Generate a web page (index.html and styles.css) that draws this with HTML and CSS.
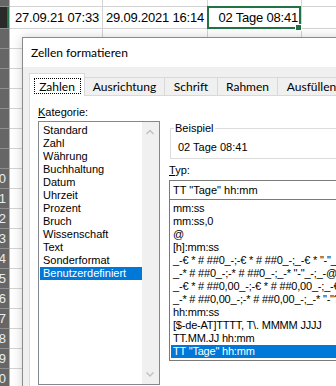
FILE: index.html
```html
<!DOCTYPE html>
<html lang="de">
<head>
<meta charset="utf-8">
<title>Zellen formatieren</title>
<link rel="stylesheet" href="styles.css">
</head>
<body>
<div class="sheet">
  <div class="h"></div><div class="c"></div><div class="c"></div><div class="c"></div><div class="c"></div>
  <div class="h sel"></div><div class="c">27.09.21 07:33</div><div class="c">29.09.2021 16:14</div><div class="c active">02 Tage 08:41</div><div class="c"></div>
  <div class="h"></div><div class="c"></div><div class="c"></div><div class="c"></div><div class="c"></div>
  <div class="h"></div><div class="c"></div><div class="c"></div><div class="c"></div><div class="c"></div>
  <div class="h"></div><div class="c"></div><div class="c"></div><div class="c"></div><div class="c"></div>
  <div class="h"></div><div class="c"></div><div class="c"></div><div class="c"></div><div class="c"></div>
  <div class="h"></div><div class="c"></div><div class="c"></div><div class="c"></div><div class="c"></div>
  <div class="h"></div><div class="c"></div><div class="c"></div><div class="c"></div><div class="c"></div>
  <div class="h"></div><div class="c"></div><div class="c"></div><div class="c"></div><div class="c"></div>
  <div class="h">10</div><div class="c"></div><div class="c"></div><div class="c"></div><div class="c"></div>
  <div class="h">11</div><div class="c"></div><div class="c"></div><div class="c"></div><div class="c"></div>
  <div class="h">12</div><div class="c"></div><div class="c"></div><div class="c"></div><div class="c"></div>
  <div class="h">13</div><div class="c"></div><div class="c"></div><div class="c"></div><div class="c"></div>
  <div class="h">14</div><div class="c"></div><div class="c"></div><div class="c"></div><div class="c"></div>
  <div class="h">15</div><div class="c"></div><div class="c"></div><div class="c"></div><div class="c"></div>
  <div class="h">16</div><div class="c"></div><div class="c"></div><div class="c"></div><div class="c"></div>
  <div class="h">17</div><div class="c"></div><div class="c"></div><div class="c"></div><div class="c"></div>
  <div class="h">18</div><div class="c"></div><div class="c"></div><div class="c"></div><div class="c"></div>
  <div class="h">19</div><div class="c"></div><div class="c"></div><div class="c"></div><div class="c"></div>
  <div class="h">20</div><div class="c"></div><div class="c"></div><div class="c"></div><div class="c"></div>
</div>

<div class="dialog">
  <div class="titlebar">Zellen formatieren</div>
  <div class="tabs">
    <div class="tab t1 on"><span class="focus">Zahlen</span></div>
    <div class="tab t2">Ausrichtung</div>
    <div class="tab t3">Schrift</div>
    <div class="tab t4">Rahmen</div>
    <div class="tab t5">Ausfüllen</div>
    <div class="tab t6">Schutz</div>
  </div>
  <div class="panel">
    <div class="col-left">
      <div class="label"><u>K</u>ategorie:</div>
      <div class="listbox">
        <div class="items">
          <div class="item">Standard</div>
          <div class="item">Zahl</div>
          <div class="item">Währung</div>
          <div class="item">Buchhaltung</div>
          <div class="item">Datum</div>
          <div class="item">Uhrzeit</div>
          <div class="item">Prozent</div>
          <div class="item">Bruch</div>
          <div class="item">Wissenschaft</div>
          <div class="item">Text</div>
          <div class="item">Sonderformat</div>
          <div class="item sel">Benutzerdefiniert</div>
        </div>
        <div class="scrollbar">
          <svg class="arrow" width="17" height="17" viewBox="0 0 17 17"><polyline points="4.5,12 8,8.5 11.5,12" fill="none" stroke="#c2c2c2" stroke-width="1.5"/></svg>
          <svg class="arrow" width="17" height="17" viewBox="0 0 17 17"><polyline points="4.5,5.5 8,9 11.5,5.5" fill="none" stroke="#c2c2c2" stroke-width="1.5"/></svg>
        </div>
      </div>
    </div>
    <div class="col-right">
      <fieldset class="group">
        <legend>Beispiel</legend>
        <div class="sample">02 Tage 08:41</div>
      </fieldset>
      <div class="label typ"><u>T</u>yp:</div>
      <div class="input">TT "Tage" hh:mm</div>
      <div class="typelist">
        <div class="titem">mm:ss</div>
        <div class="titem">mm:ss,0</div>
        <div class="titem">@</div>
        <div class="titem">[h]:mm:ss</div>
        <div class="titem">_-€ * # ##0_-;-€ * # ##0_-;_-€ * "-"_-;_-@_-</div>
        <div class="titem">_-* # ##0_-;-* # ##0_-;_-* "-"_-;_-@_-</div>
        <div class="titem">_-€ * # ##0,00_-;-€ * # ##0,00_-;_-€ * "-"??_-;_-@_-</div>
        <div class="titem">_-* # ##0,00_-;-* # ##0,00_-;_-* "-"??_-;_-@_-</div>
        <div class="titem">hh:mm:ss</div>
        <div class="titem">[$-de-AT]TTTT, T\. MMMM JJJJ</div>
        <div class="titem">TT.MM.JJ hh:mm</div>
        <div class="titem sel">TT "Tage" hh:mm</div>
      </div>
    </div>
  </div>
</div>
</body>
</html>
```

FILE: styles.css
```css
html, body {
  margin: 0;
  padding: 0;
}
body {
  width: 336px;
  height: 386px;
  overflow: hidden;
  position: relative;
  background: #ffffff;
}

/* ---------- spreadsheet ---------- */
.sheet {
  display: grid;
  grid-template-columns: 10px 93px 105px 94px 60px;
  grid-template-rows: 7px 22px repeat(18, 20px);
  font-family: "Liberation Sans", Arial, sans-serif;
  font-size: 13px;
  color: #000;
}
.c {
  box-sizing: border-box;
  border-right: 1px solid #d4d4d4;
  border-bottom: 1px solid #d4d4d4;
  text-align: right;
  padding: 1px 3px 0 0;
  line-height: 20px;
  letter-spacing: -0.2px;
  white-space: nowrap;
}
.c.active {
  position: relative;
}
.c.active::before {
  content: "";
  position: absolute;
  left: -1px;
  top: -1px;
  width: 94px;
  height: 23px;
  box-sizing: border-box;
  border: 2px solid #217346;
}
.c.active::after {
  content: "";
  position: absolute;
  left: 88px;
  top: 18px;
  width: 5px;
  height: 5px;
  background: #217346;
  box-shadow: 0 0 0 1px #ffffff;
}
.h {
  box-sizing: border-box;
  background: #666666;
  border-right: 1px solid #b4b4b4;
  border-bottom: 1px solid #8e8e8e;
  color: #ececec;
  overflow: hidden;
  white-space: nowrap;
  text-align: right;
  padding-right: 3px;
  line-height: 19px;
  direction: rtl;
}
.h.sel {
  background: #2a2a2a;
  box-shadow: inset -2px 0 0 #217346;
}

/* ---------- dialog ---------- */
.dialog {
  position: absolute;
  left: 22px;
  top: 37px;
  width: 420px;
  height: 400px;
  border: 1px solid #8a8a8a;
  background: #f0f0f0;
  box-shadow: 0 0 10px rgba(0, 0, 0, 0.18);
  font-family: Lato, "Noto Sans", sans-serif;
  font-size: 12px;
  color: #000;
  display: flex;
  flex-direction: column;
}
.titlebar {
  height: 29px;
  background: #ffffff;
  display: flex;
  align-items: center;
  padding-left: 8px;
  flex: none;
}
.tabs {
  display: flex;
  align-items: flex-end;
  height: 22px;
  margin-top: 6px;
  padding-left: 6px;
  position: relative;
  z-index: 1;
  flex: none;
}
.tab {
  box-sizing: border-box;
  height: 18px;
  border: 1px solid #d9d9d9;
  border-bottom: 0;
  margin-left: -1px;
  background: #f0f0f0;
  display: flex;
  align-items: center;
  justify-content: center;
  white-space: nowrap;
  flex: none;
}
.tab.on {
  height: 23px;
  margin-bottom: -1px;
  margin-left: 0;
  background: #ffffff;
  align-items: flex-start;
  position: relative;
  z-index: 2;
}
.t1 { width: 56px; }
.t2 { width: 81px; }
.t3 { width: 54px; }
.t4 { width: 61px; }
.t5 { width: 69px; }
.t6 { width: 60px; }
.focus {
  box-sizing: border-box;
  margin-top: 4px;
  width: 47px;
  height: 16px;
  border: 1px dotted #000;
  display: flex;
  align-items: center;
  justify-content: center;
}

.panel {
  flex: 1;
  margin-left: 6px;
  border: 1px solid #d9d9d9;
  background: #ffffff;
  display: flex;
  padding: 10px 0 0 8px;
  font-family: "Liberation Sans", Arial, sans-serif;
  font-size: 11px;
}
.col-left {
  width: 122px;
  flex: none;
  display: flex;
  flex-direction: column;
}
.label {
  line-height: 13px;
  height: 13px;
  white-space: nowrap;
}
.listbox {
  margin-top: 2px;
  box-sizing: border-box;
  height: 264px;
  border: 1px solid #828790;
  display: flex;
}
.items {
  flex: 1;
  padding: 2px 0 0 1px;
  min-width: 0;
}
.item {
  line-height: 13px;
  padding-left: 3px;
  white-space: nowrap;
}
.item.sel,
.titem.sel {
  background: #0078d7;
  color: #ffffff;
}
.scrollbar {
  width: 17px;
  flex: none;
  background: #f0f0f0;
  display: flex;
  flex-direction: column;
  justify-content: space-between;
}
.arrow {
  display: block;
}

.col-right {
  flex: 1;
  margin-left: 9px;
  padding-top: 16px;
  min-width: 0;
}
.group {
  margin: 0 0 0 1px;
  border: 1px solid #dcdcdc;
  padding: 6px 0 4px 3px;
}
.group legend {
  padding: 0 1px;
  line-height: 13px;
}
.sample {
  padding-left: 4px;
  line-height: 13px;
  white-space: nowrap;
}
.typ {
  margin-top: 5px;
}
.input {
  margin-top: 3px;
  box-sizing: border-box;
  height: 20px;
  border: 1px solid #7a7a7a;
  padding-left: 3px;
  line-height: 18px;
  white-space: nowrap;
}
.typelist {
  border: 1px solid #7a7a7a;
  border-top: 0;
  padding: 2px 0 2px 1px;
  letter-spacing: -0.2px;
}
.titem {
  line-height: 13px;
  padding-left: 2px;
  white-space: nowrap;
  overflow: hidden;
}
```
